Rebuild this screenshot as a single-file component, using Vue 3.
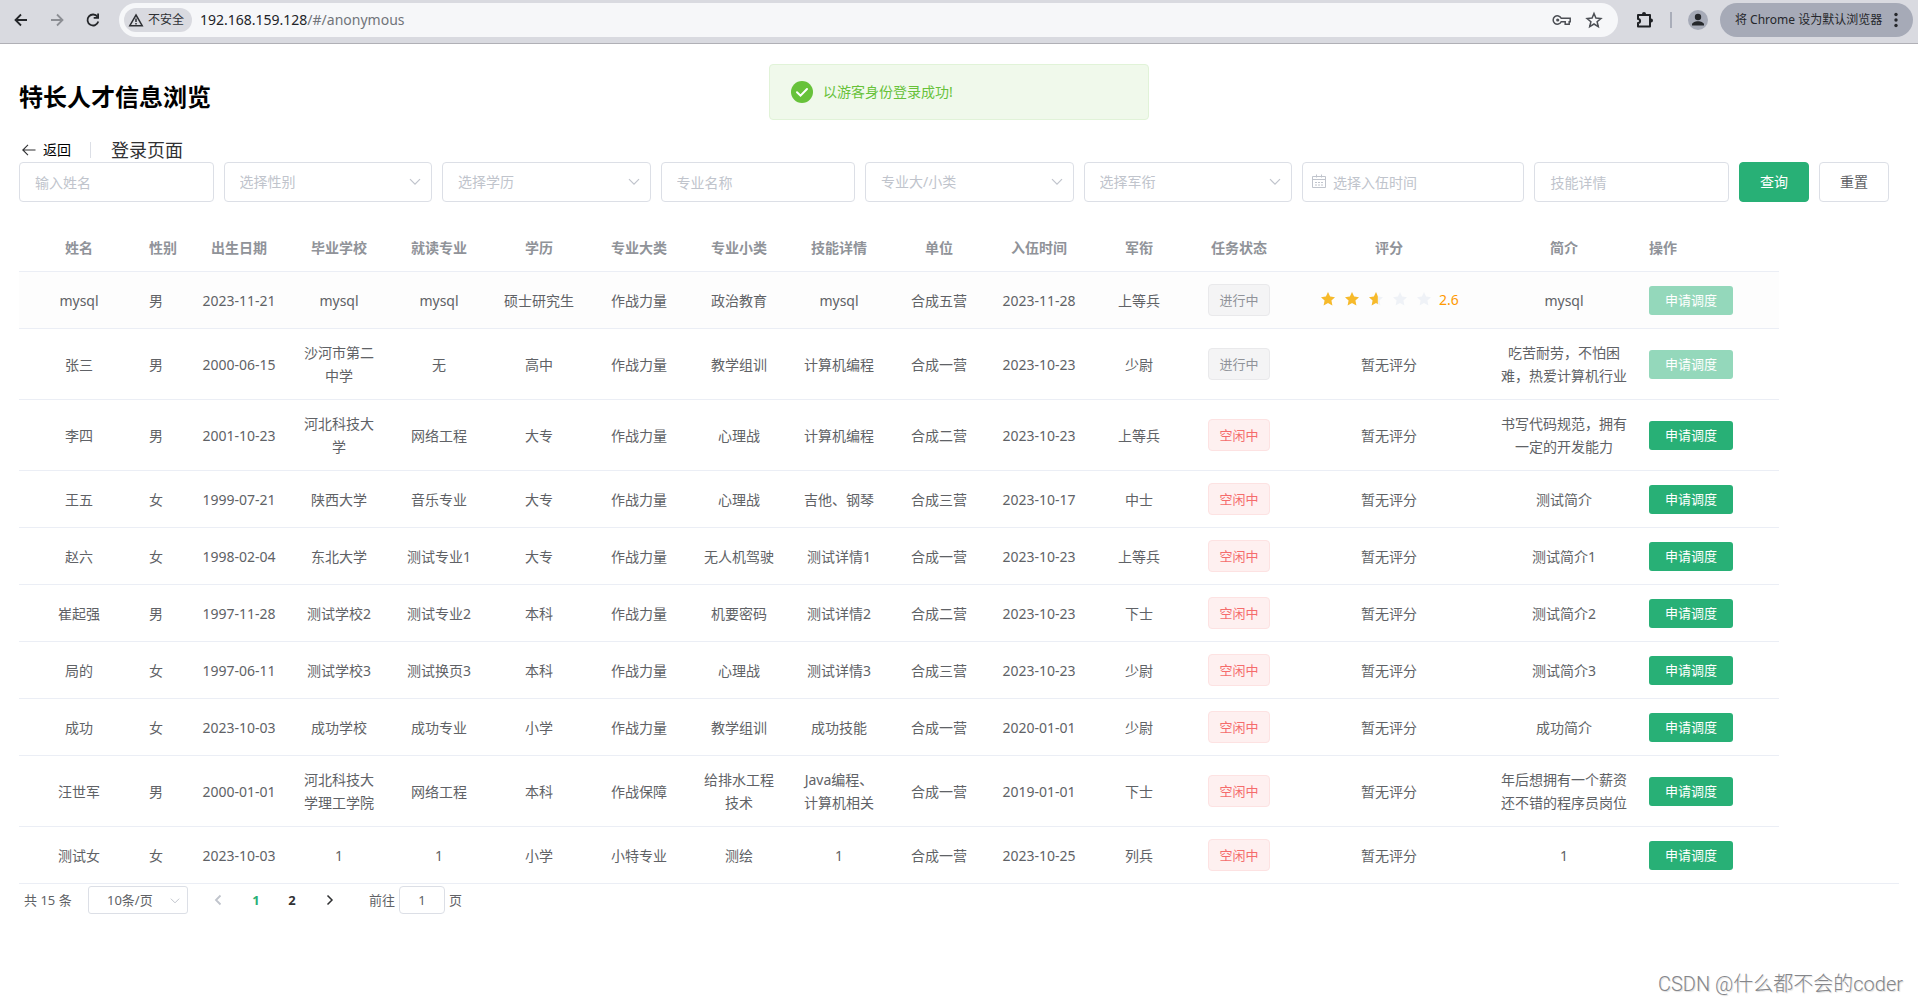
<script setup>
import { ref } from 'vue'

const filters = [
  { id: 'name', kind: 'input', label: '输入姓名' },
  { id: 'gender', kind: 'select', label: '选择性别' },
  { id: 'education', kind: 'select', label: '选择学历' },
  { id: 'major', kind: 'input', label: '专业名称' },
  { id: 'category', kind: 'select', label: '专业大/小类' },
  { id: 'rank', kind: 'select', label: '选择军衔' },
  { id: 'enlisted', kind: 'date', label: '选择入伍时间' },
  { id: 'skill', kind: 'input', label: '技能详情' },
]

const columns = [
  { title: '姓名', width: 120 },
  { title: '性别', width: 50, left: true },
  { title: '出生日期', width: 100 },
  { title: '毕业学校', width: 100 },
  { title: '就读专业', width: 100 },
  { title: '学历', width: 100 },
  { title: '专业大类', width: 100 },
  { title: '专业小类', width: 100 },
  { title: '技能详情', width: 100 },
  { title: '单位', width: 100 },
  { title: '入伍时间', width: 100 },
  { title: '军衔', width: 100 },
  { title: '任务状态', width: 100 },
  { title: '评分', width: 200 },
  { title: '简介', width: 150 },
  { title: '操作', width: 140, left: true },
]

const people = [
  { cells: ['mysql', '男', '2023-11-21', 'mysql', 'mysql', '硕士研究生', '作战力量', '政治教育', 'mysql', '合成五营', '2023-11-28', '上等兵'], busy: true, rate: 2.6, intro: 'mysql' },
  { cells: ['张三', '男', '2000-06-15', '沙河市第二中学', '无', '高中', '作战力量', '教学组训', '计算机编程', '合成一营', '2023-10-23', '少尉'], busy: true, intro: '吃苦耐劳，不怕困难，热爱计算机行业' },
  { cells: ['李四', '男', '2001-10-23', '河北科技大学', '网络工程', '大专', '作战力量', '心理战', '计算机编程', '合成二营', '2023-10-23', '上等兵'], intro: '书写代码规范，拥有一定的开发能力' },
  { cells: ['王五', '女', '1999-07-21', '陕西大学', '音乐专业', '大专', '作战力量', '心理战', '吉他、钢琴', '合成三营', '2023-10-17', '中士'], intro: '测试简介' },
  { cells: ['赵六', '女', '1998-02-04', '东北大学', '测试专业1', '大专', '作战力量', '无人机驾驶', '测试详情1', '合成一营', '2023-10-23', '上等兵'], intro: '测试简介1' },
  { cells: ['崔起强', '男', '1997-11-28', '测试学校2', '测试专业2', '本科', '作战力量', '机要密码', '测试详情2', '合成二营', '2023-10-23', '下士'], intro: '测试简介2' },
  { cells: ['局的', '女', '1997-06-11', '测试学校3', '测试换页3', '本科', '作战力量', '心理战', '测试详情3', '合成三营', '2023-10-23', '少尉'], intro: '测试简介3' },
  { cells: ['成功', '女', '2023-10-03', '成功学校', '成功专业', '小学', '作战力量', '教学组训', '成功技能', '合成一营', '2020-01-01', '少尉'], intro: '成功简介' },
  { cells: ['汪世军', '男', '2000-01-01', '河北科技大学理工学院', '网络工程', '本科', '作战保障', '给排水工程技术', 'Java编程、计算机相关', '合成一营', '2019-01-01', '下士'], intro: '年后想拥有一个薪资还不错的程序员岗位' },
  { cells: ['测试女', '女', '2023-10-03', '1', '1', '小学', '小特专业', '测绘', '1', '合成一营', '2023-10-25', '列兵'], intro: '1' },
]

const page = ref('1')
const starPath = 'M9 2l2.1 4.6 4.9.6-3.6 3.4 1 5L9 13.1l-4.400 2.500 1-5L2 7.200l4.900-.6z'
const fillOf = (rate, n) => Math.round(Math.max(0, Math.min(1, rate - n + 1)) * 10) / 10
</script>

<template>
  <div class="page">
    <header class="chrome">
      <button class="nav" type="button" aria-label="后退">
        <svg width="16" height="16" viewBox="0 0 16 16"><path d="M14 8H3M8 2.500L2.500 8 8 13.500" fill="none" stroke="#25272b" stroke-width="1.800" /></svg>
      </button>
      <button class="nav" type="button" aria-label="前进">
        <svg width="16" height="16" viewBox="0 0 16 16"><path d="M2 8h11M8 2.500L13.500 8 8 13.500" fill="none" stroke="#8c8e94" stroke-width="1.800" /></svg>
      </button>
      <button class="nav" type="button" aria-label="刷新">
        <svg width="16" height="16" viewBox="0 0 16 16"><path d="M13.300 9.500A5.500 5.500 0 1 1 12.500 4.800" fill="none" stroke="#25272b" stroke-width="1.800" /><path d="M14 1.500v5.300H8.700V5h3.500V1.500z" fill="#25272b" /></svg>
      </button>
      <div class="omnibox">
        <span class="chip">
          <svg width="16" height="14" viewBox="0 0 16 14"><path d="M8 2L14.200 12.700H1.800z" fill="none" stroke="#2d2f33" stroke-width="1.500" /><path d="M8 5.500v3.500M8 10v1.500" stroke="#2d2f33" stroke-width="1.500" /></svg>
          不安全
        </span>
        <span class="url">192.168.159.128<span class="path">/#/anonymous</span></span>
        <svg class="key" width="20" height="16" viewBox="0 0 20 16"><g fill="none" stroke="#4c4f55" stroke-width="1.500"><path d="M9.200 6.300A4.200 4.200 0 1 0 9.200 9.700h4v2.500h4V9.700H18.200V6.300z" /></g><circle cx="5.700" cy="8" r="1.600" fill="#4c4f55" /></svg>
        <svg width="18" height="18" viewBox="0 0 18 18"><path d="M9 2.500l1.900 4.600 5 .4-3.800 3.200 1.200 4.900L9 13l-4.300 2.600 1.200-4.900-3.800-3.200 5-.4z" fill="none" stroke="#4c4f55" stroke-width="1.500" /></svg>
      </div>
      <svg class="puzzle" width="18" height="18" viewBox="0 0 18 18"><path d="M2 4h12v11.500H2v-3.500c2.800 0 2.800-4 0-4z" fill="none" stroke="#1f2125" stroke-width="2" stroke-linejoin="round" /><circle cx="8" cy="3" r="2" fill="#1f2125" /><circle cx="15" cy="9.500" r="2" fill="#1f2125" /></svg>
      <span class="bar-sep"></span>
      <svg class="avatar" width="20" height="20" viewBox="0 0 20 20"><circle cx="10" cy="10" r="10" fill="#a6aab7" /><circle cx="10" cy="7" r="3.200" fill="#25272b" /><path d="M4 15.500v-1c0-2 3-3.300 6-3.300s6 1.300 6 3.300v1z" fill="#25272b" /></svg>
      <button class="default-browser" type="button">
        <span>将 Chrome 设为默认浏览器</span>
        <svg width="4" height="16" viewBox="0 0 4 16" fill="#25272b"><circle cx="2" cy="2.500" r="1.700" /><circle cx="2" cy="8" r="1.700" /><circle cx="2" cy="13.500" r="1.700" /></svg>
      </button>
    </header>

    <div class="message" role="alert">
      <svg width="22" height="22" viewBox="0 0 22 22"><circle cx="11" cy="11" r="11" fill="#67c23a" /><path d="M6 11.300l3.500 3.400L16 8" fill="none" stroke="#fff" stroke-width="2" stroke-linecap="round" /></svg>
      <span>以游客身份登录成功!</span>
    </div>

    <main>
      <h1>特长人才信息浏览</h1>
      <div class="back-row">
        <a class="back" href="#/login">
          <svg width="14" height="14" viewBox="0 0 14 14"><path d="M13.500 7H1M6 1.800L.8 7 6 12.200" fill="none" stroke="#303133" stroke-width="1.100" /></svg>
          返回
        </a>
        <span class="divider"></span>
        <span class="target">登录页面</span>
      </div>

      <form class="filters" @submit.prevent>
        <div v-for="f in filters" :key="f.id" class="field" :class="f.kind">
          <select v-if="f.kind === 'select'" :id="f.id" :aria-label="f.label">
            <option>{{ f.label }}</option>
          </select>
          <input v-else :id="f.id" type="text" :placeholder="f.label" :aria-label="f.label">
          <svg v-if="f.kind === 'select'" class="caret" width="12" height="8" viewBox="0 0 12 8"><path d="M1 1.200l5 5 5-5" fill="none" stroke="#c0c4cc" stroke-width="1.200" /></svg>
          <svg v-if="f.kind === 'date'" class="calendar" width="14" height="14" viewBox="0 0 14 14"><path d="M.5 2.500h13v11H.5zM.5 5.500h13M4.500 .5v3M9.500 .5v3M3 8.500h2M6 8.500h2M9 8.500h2M3 11h2M6 11h2M9 11h2" fill="none" stroke="#c0c4cc" /></svg>
        </div>
        <button class="btn primary" type="submit">查询</button>
        <button class="btn" type="reset">重置</button>
      </form>

      <div class="table-wrap">
        <table>
          <colgroup>
            <col v-for="c in columns" :key="c.title" :style="{ width: c.width + 'px' }">
          </colgroup>
          <thead>
            <tr>
              <th v-for="c in columns" :key="c.title" :class="{ left: c.left }">{{ c.title }}</th>
            </tr>
          </thead>
          <tbody>
            <tr v-for="p in people" :key="p.cells[0]">
              <td v-for="(cell, i) in p.cells" :key="i" :class="{ left: columns[i].left }">{{ cell }}</td>
              <td><span class="tag" :class="p.busy ? 'info' : 'danger'">{{ p.busy ? '进行中' : '空闲中' }}</span></td>
              <td>
                <div v-if="p.rate" class="rate">
                  <svg v-for="n in 5" :key="n" width="18" height="18" viewBox="0 0 18 18">
                    <clipPath :id="'fill' + n"><rect width="0" height="18" :style="{ width: 18 * fillOf(p.rate, n) + 'px' }" /></clipPath>
                    <path :d="starPath" fill="#eff2f7" />
                    <path :d="starPath" fill="#f7ba2a" :clip-path="'url(#fill' + n + ')'" />
                  </svg>
                  <span>{{ p.rate }}</span>
                </div>
                <template v-else>暂无评分</template>
              </td>
              <td>{{ p.intro }}</td>
              <td class="left"><button class="apply" type="button" :disabled="p.busy">申请调度</button></td>
            </tr>
          </tbody>
        </table>
      </div>

      <nav class="pagination" aria-label="分页">
        <span class="total">共 15 条</span>
        <span class="sizes">
          <select aria-label="每页条数"><option>10条/页</option></select>
          <svg class="caret" width="10" height="8" viewBox="0 0 12 8"><path d="M1 1.200l5 5 5-5" fill="none" stroke="#c0c4cc" stroke-width="1.200" /></svg>
        </span>
        <button type="button" disabled aria-label="上一页"><svg width="8" height="12" viewBox="0 0 8 12"><path d="M6.500 1.500L2 6l4.500 4.500" fill="none" stroke="#c0c4cc" stroke-width="1.800" /></svg></button>
        <span class="pager">
          <button class="active" type="button">1</button>
          <button type="button">2</button>
        </span>
        <button type="button" aria-label="下一页"><svg width="8" height="12" viewBox="0 0 8 12"><path d="M1.500 1.500L6 6l-4.500 4.500" fill="none" stroke="#303133" stroke-width="1.500" /></svg></button>
        <label class="jump">前往<input v-model="page" type="text">页</label>
      </nav>
    </main>
    <div class="watermark">CSDN @什么都不会的coder</div>
  </div>
</template>

<style>
body {
  background: #fff;
}
</style>

<style scoped>
.page,
.page * {
  box-sizing: border-box;
}
.page {
  position: relative;
  min-height: 100vh;
  color: #606266;
  font: 14px/24px "Noto Sans", "Noto Sans CJK SC", sans-serif;
}
button,
input,
select {
  font: inherit;
  color: inherit;
  margin: 0;
}
svg {
  display: block;
  flex: none;
}

.chrome {
  display: flex;
  align-items: center;
  height: 44px;
  padding: 0 5px 4px 13px;
  background: #d9dae0;
  border-bottom: 1px solid #b0b0b6;
}
.nav {
  width: 16px;
  padding: 0;
  margin-right: 20px;
  border: 0;
  background: none;
}
.omnibox {
  display: flex;
  flex: 1;
  align-items: center;
  height: 34px;
  margin-left: -2px;
  padding: 0 15px 0 5px;
  border-radius: 17px;
  background: #f6f7f9;
}
.chip {
  display: flex;
  align-items: center;
  gap: 4px;
  height: 24px;
  width: 68px;
  padding-left: 4px;
  border-radius: 12px;
  background: #d9dae0;
  color: #2d2f33;
  font-size: 12px;
}
.url {
  flex: 1;
  margin-left: 8px;
  color: #222428;
}
.path {
  color: #71747a;
}
.key {
  margin-right: 13px;
}
.puzzle {
  margin: 0 16px 0 18px;
}
.bar-sep {
  width: 2px;
  height: 16px;
  margin-right: 16px;
  background: #a9adb9;
}
.avatar {
  margin-right: 12px;
}
.default-browser {
  display: flex;
  align-items: center;
  justify-content: space-between;
  width: 193px;
  height: 34px;
  padding: 0 15px;
  border: 0;
  border-radius: 17px;
  background: #a6aab7;
  color: #25272b;
  font-size: 12px;
  white-space: nowrap;
}

.message {
  position: absolute;
  top: 64px;
  left: 50%;
  display: flex;
  align-items: center;
  gap: 10px;
  width: 380px;
  height: 56px;
  margin-left: -190px;
  padding: 0 21px;
  border: 1px solid #e1f3d8;
  border-radius: 4px;
  background: #f0f9eb;
  color: #67c23a;
}

main {
  padding: 37px 19px 0;
}
h1 {
  margin: 0 0 25px;
  color: #000;
  font-size: 24px;
  line-height: 32px;
}
.back-row {
  display: flex;
  align-items: center;
  height: 24px;
}
.back {
  display: flex;
  align-items: center;
  gap: 7px;
  padding-left: 3px;
  color: #000;
  text-decoration: none;
}
.divider {
  width: 1px;
  height: 16px;
  margin: 0 20px 0 19px;
  background: #dcdfe6;
}
.target {
  color: #303133;
  font-size: 18px;
}

.filters {
  display: flex;
  gap: 10px;
  margin: 0 10px 22px 0;
}
.field {
  position: relative;
  flex: 14 1 0;
  min-width: 0;
}
.field.select {
  flex-grow: 15;
}
.field.date {
  flex-grow: 16;
}
.field input,
.field select {
  display: block;
  width: 100%;
  height: 40px;
  padding: 0 15px;
  border: 1px solid #dcdfe6;
  border-radius: 4px;
  background: #fff;
  appearance: none;
}
.field select {
  color: #c0c4cc;
}
.field input::placeholder {
  color: #c0c4cc;
}
.field.date input {
  padding-left: 30px;
}
.caret {
  position: absolute;
  top: 16px;
  right: 11px;
  pointer-events: none;
}
.calendar {
  position: absolute;
  top: 12px;
  left: 10px;
}
.btn {
  width: 70px;
  height: 40px;
  padding: 0;
  border: 1px solid #dcdfe6;
  border-radius: 4px;
  background: #fff;
}
.primary {
  border-color: #28b076;
  background: #28b076;
  color: #fff;
}

.table-wrap {
  overflow-x: auto;
  border-bottom: 1px solid #ebeef5;
}
table {
  width: 1760px;
  table-layout: fixed;
  border-spacing: 0;
}
th,
td {
  padding: 12px 10px;
  border-bottom: 1px solid #ebeef5;
  line-height: 23px;
  text-align: center;
  vertical-align: middle;
}
th {
  color: #909399;
  font-weight: 700;
}
.left {
  text-align: left;
}
td.left {
  white-space: nowrap;
}
tbody tr:first-child {
  background: #fdfdfd;
}
tbody tr:last-child td {
  border-bottom: 0;
}
.tag {
  display: inline-block;
  height: 32px;
  padding: 0 10px;
  border: 1px solid;
  border-radius: 4px;
  font-size: 13px;
  line-height: 30px;
  vertical-align: top;
}
.info {
  border-color: #e9e9eb;
  background: #f4f4f5;
  color: #909399;
}
.danger {
  border-color: #fde2e2;
  background: #fef0f0;
  color: #f56c6c;
}
.rate {
  display: flex;
  align-items: center;
  justify-content: center;
  gap: 6px;
  padding-bottom: 2px;
  color: #ff9900;
}
.apply {
  display: block;
  width: 84px;
  height: 29px;
  padding: 0;
  border: 0;
  border-radius: 3px;
  background: #28b076;
  color: #fff;
  font-size: 13px;
  line-height: 29px;
}
.apply:disabled {
  background: #94d8bb;
}

.pagination {
  display: flex;
  align-items: center;
  padding: 2px 5px;
  color: #606266;
  font-size: 13px;
}
.total {
  width: 64px;
}
.sizes {
  position: relative;
  margin-right: 12px;
}
.sizes select {
  display: block;
  width: 100px;
  height: 28px;
  padding: 0 18px;
  border: 1px solid #dcdfe6;
  border-radius: 3px;
  background: #fff;
  appearance: none;
}
.sizes .caret {
  top: 11px;
  right: 8px;
}
.pagination button {
  display: flex;
  align-items: center;
  justify-content: center;
  width: 36px;
  height: 28px;
  padding: 0;
  border: 0;
  background: none;
  color: #303133;
  font-weight: 700;
}
.pager {
  display: flex;
  margin: 0 2px;
}
.pagination .active {
  color: #28b076;
}
.jump {
  display: flex;
  align-items: center;
  gap: 4px;
  margin-left: 21px;
}
.jump input {
  width: 46px;
  height: 28px;
  padding: 0 3px;
  border: 1px solid #dcdfe6;
  border-radius: 4px;
  text-align: center;
}

.watermark {
  position: absolute;
  right: 15px;
  bottom: 4px;
  color: #85868a;
  font-family: Roboto, "Noto Sans CJK SC", sans-serif;
  font-size: 20px;
  font-weight: 300;
  line-height: 28px;
  text-shadow: 1px 1px 1px #ddd;
}
</style>
